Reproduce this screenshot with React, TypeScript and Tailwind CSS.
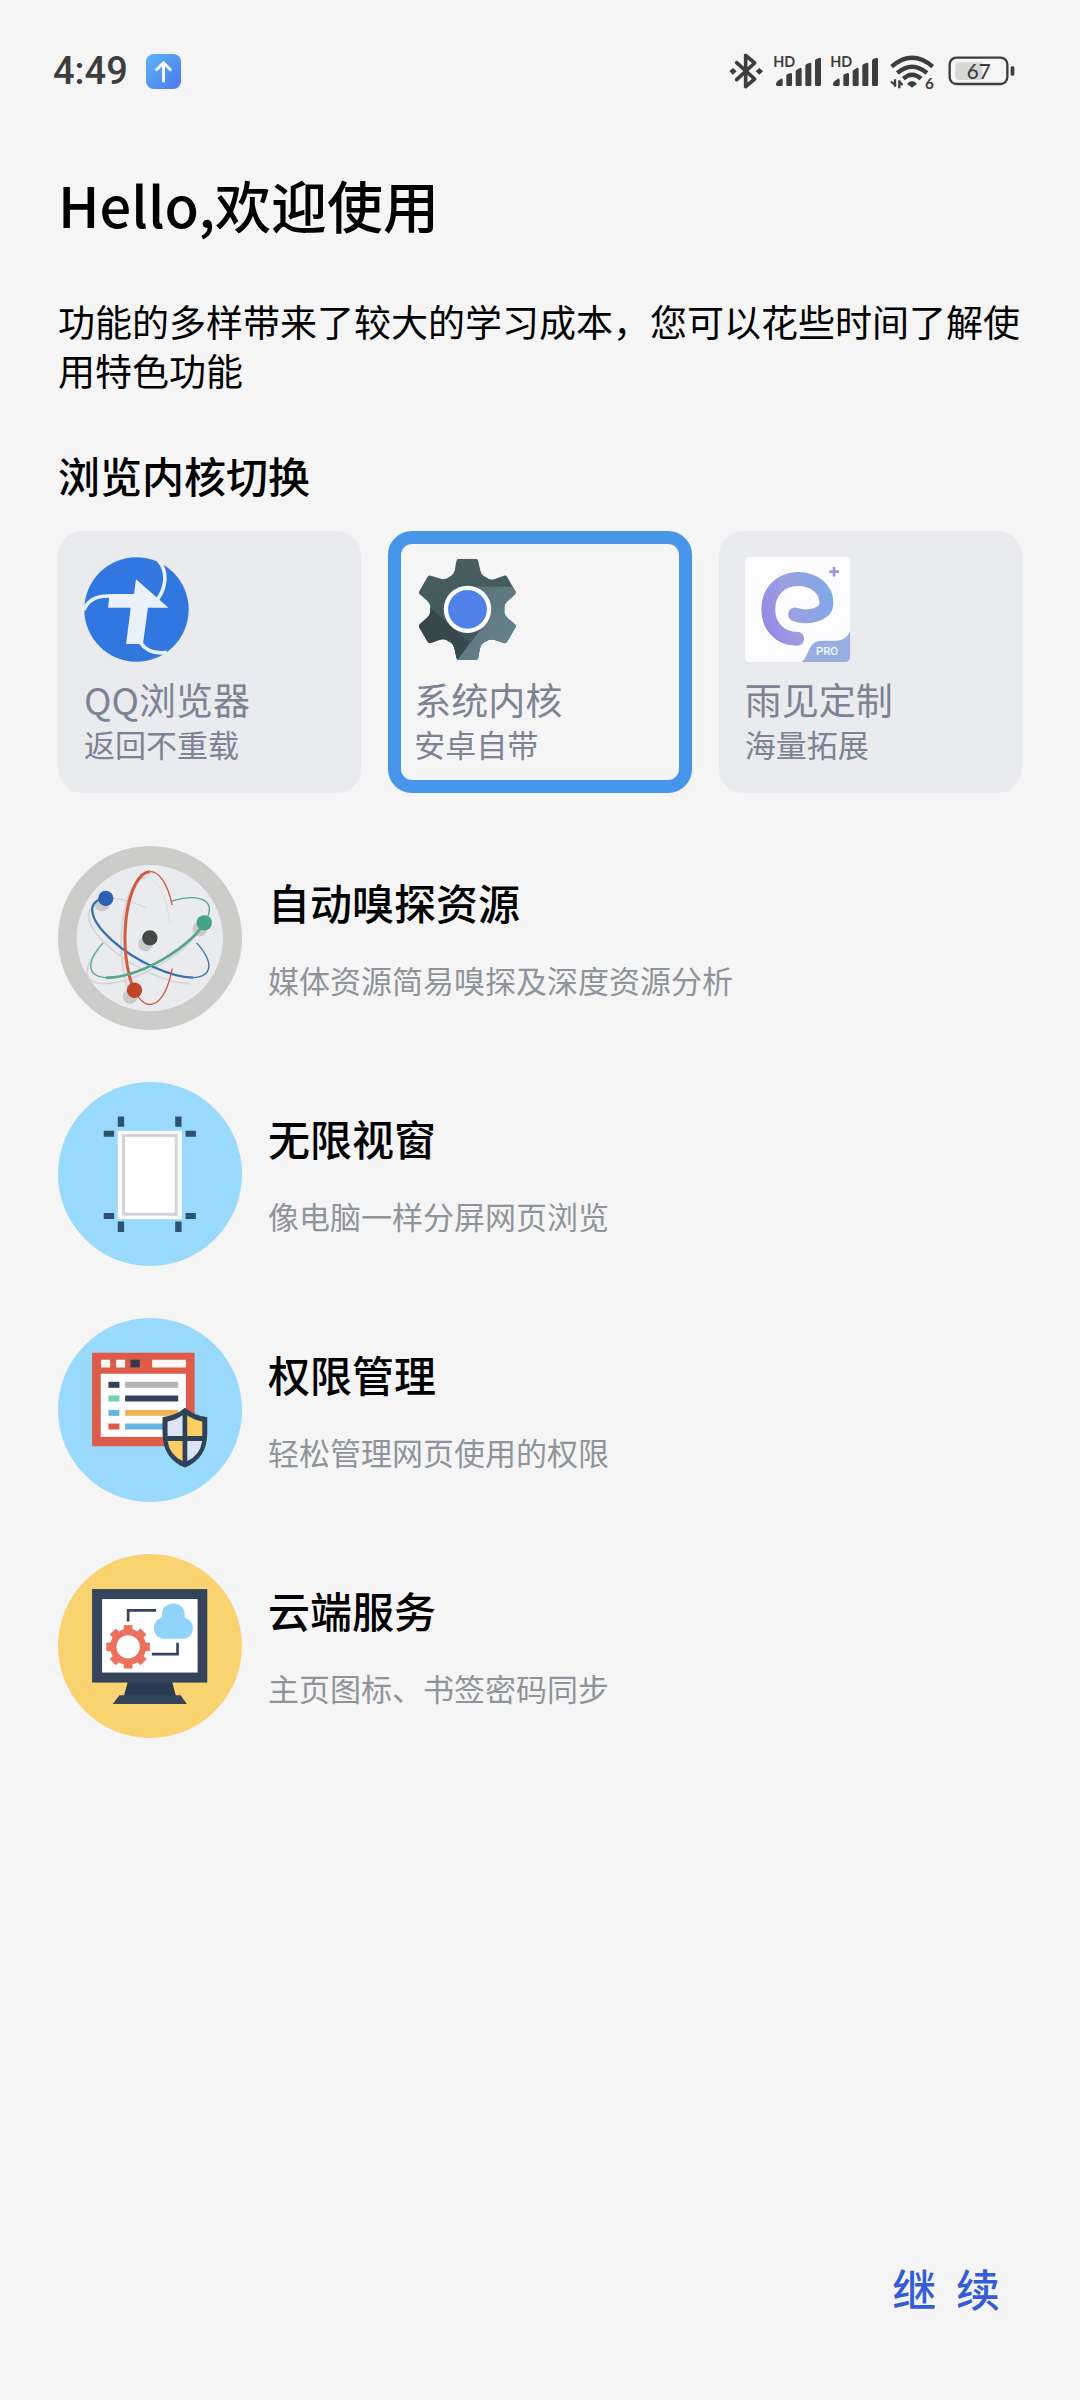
import React, { useState } from 'react';

interface Kernel {
  id: string;
  title: string;
  subtitle: string;
  icon: React.ReactNode;
}

interface Feature {
  title: string;
  subtitle: string;
  icon: React.ReactNode;
}

const TEETH_6 = [0, 60, 120, 180, 240, 300];
const TEETH_8 = [0, 45, 90, 135, 180, 225, 270, 315];

const BluetoothIcon = () => (
  <svg className="w-[36px] h-[37px]" viewBox="88 66 108 111" fill="none" stroke="#3d3d3d" strokeWidth="11" strokeLinejoin="round" strokeLinecap="round">
    <path d="M111 95 L165 144 L138 167 V73 L165 96 L111 146" />
    <path d="M89 121 L100 111 L111 121 L100 131Z M168 121 L179 111 L190 121 L179 131Z" fill="#3d3d3d" stroke="none" />
  </svg>
);

const SignalIcon = () => (
  <svg className="w-[49px] h-[37px]" viewBox="220 66 147 111" fill="#3d3d3d">
    <text x="221" y="108" fontSize="43" fontWeight="700" fontFamily="Lato, sans-serif">HD</text>
    <path d="M229 160 Q229 154 234 150 L244 143 Q249 142 249 147 V161 Q249 165 245 165 H234 Q229 165 229 160Z" />
    <path d="M260 134 Q260 131 264 129 L273 126 Q277 126 277 130 V161 Q277 165 273 165 H264 Q260 165 260 161Z" />
    <path d="M288 121 Q288 118 292 116 L302 110 Q306 110 306 114 V161 Q306 165 302 165 H292 Q288 165 288 161Z" />
    <path d="M317 104 Q317 101 321 99 L331 95 Q335 95 335 99 V161 Q335 165 331 165 H321 Q317 165 317 161Z" />
    <path d="M346 89 Q346 86 350 84 L360 80 Q364 80 364 84 V161 Q364 165 360 165 H350 Q346 165 346 161Z" />
  </svg>
);

const WifiIcon = () => (
  <svg className="w-[48px] h-[37px] overflow-visible" viewBox="562 66 144 111" fill="none" stroke="#3d3d3d" strokeWidth="13">
    <path d="M576 107 Q637 54 699 107" />
    <path d="M593 126 Q637 88 682 126" />
    <path d="M611 143 Q637 119 664 143" />
    <path d="M622 158 Q637 142 652 158 L637 170Z" fill="#3d3d3d" stroke="none" />
    <path d="M586 145 V167 M589 164 L574 152 M599 172 V148 M597 151 L609 162" strokeWidth="7" />
    <text x="676" y="173" fontSize="46" fontWeight="700" fontFamily="Lato, sans-serif" fill="#3d3d3d" stroke="none">6</text>
  </svg>
);

const BatteryIcon = () => (
  <svg className="w-[72px] h-[37px]" viewBox="730 66 216 111">
    <rect x="750" y="80" width="173" height="79" rx="20" fill="none" stroke="#3d3d3d" strokeWidth="7" />
    <path d="M780 94 H848 V147 H780 Q767 147 767 134 V107 Q767 94 780 94Z" fill="#d6d6d6" />
    <rect x="933" y="106" width="11" height="28" rx="4" fill="#3d3d3d" />
    <text x="837" y="143" textAnchor="middle" fontSize="62" fontWeight="500" fontFamily="Lato, sans-serif" fill="#3d3d3d">67</text>
  </svg>
);

const UploadIcon = () => (
  <svg className="w-[35px] h-[35px]" viewBox="0 0 36 36">
    <defs>
      <linearGradient id="upload" x1="0" y1="0" x2="1" y2="1">
        <stop offset="0" stopColor="#5fb4f8" />
        <stop offset="1" stopColor="#4a78ec" />
      </linearGradient>
    </defs>
    <rect width="36" height="36" rx="8" fill="url(#upload)" />
    <path d="M18 29 V9 M10 17 L18 9 L26 17" fill="none" stroke="#f4f8ff" strokeWidth="3" />
  </svg>
);

const QQIcon = () => (
  <svg className="size-[105px]" viewBox="133 140 315 317">
    <circle cx="290.500" cy="298.500" r="157.500" fill="#3277df" />
    <g fill="none" stroke="#e9f1fa" strokeWidth="11">
      <path d="M357 151 C386 184 380 232 354 268" />
      <path d="M132 300 C145 266 178 256 214 258" />
      <path d="M303 399 C322 428 352 432 382 428" />
    </g>
    <path d="M289 207 L387 293 H325 L310 403 H259 L273 293 H205 L209 252 H283Z" fill="#e9f1fa" />
  </svg>
);

const GearIcon = () => (
  <svg className="size-[105px]" viewBox="133 140 315 317">
    <defs>
      <clipPath id="gear">
        <circle cx="293" cy="298" r="112" />
        {TEETH_6.map(a => (
          <path
            key={a}
            transform={`rotate(${a} 293 298)`}
            d="M235 202 Q252 196 255 180 L260 152 Q262 145 268 145 H318 Q324 145 326 152 L332 180 Q335 196 351 202 L293 298Z"
          />
        ))}
      </clipPath>
      <linearGradient id="gearTop" x1="0" y1="0" x2="0" y2="1">
        <stop offset="0" stopColor="#495e60" />
        <stop offset="1" stopColor="#405558" />
      </linearGradient>
      <linearGradient id="gearLight" x1="0" y1="0" x2="1" y2="1">
        <stop offset="0" stopColor="#566f77" />
        <stop offset="1" stopColor="#6b8792" />
      </linearGradient>
    </defs>
    <g clipPath="url(#gear)">
      <rect x="133" y="140" width="315" height="317" fill="url(#gearTop)" />
      <path d="M176 288 L300 400 L262 455 H133 V340Z" fill="#36474d" />
      <path d="M325 230 H448 V457 H258 L340 350Z" fill="url(#gearLight)" />
    </g>
    <circle cx="293.500" cy="298" r="65" fill="#4f82e9" stroke="#fbfcff" strokeWidth="13" />
  </svg>
);

const YujianIcon = () => (
  <svg className="size-[105px]" viewBox="134 141 316 316">
    <defs>
      <linearGradient id="yujian" gradientUnits="userSpaceOnUse" x1="190" y1="330" x2="395" y2="260">
        <stop offset="0" stopColor="#938ae6" />
        <stop offset="0.400" stopColor="#9c9ee3" />
        <stop offset="1" stopColor="#7fa9e6" />
      </linearGradient>
      <clipPath id="yujianTile">
        <rect x="134" y="141" width="316" height="316" rx="14" />
      </clipPath>
    </defs>
    <g clipPath="url(#yujianTile)">
      <rect x="134" y="141" width="316" height="316" fill="#fdfdff" />
      <path d="M304 457 C328 440 322 394 364 393 H408 Q440 393 450 364 V457Z" fill="#96aee0" />
    </g>
    <path
      d="M291 387 C236 387 204 346 204 298 C204 245 243 207 293 207 C345 207 379 240 379 278 C379 300 368 307 350 314 C327 322 305 321 285 314"
      fill="none"
      stroke="url(#yujian)"
      strokeWidth="42"
      strokeLinecap="round"
      strokeLinejoin="round"
    />
    <path d="M402 171 V200 M388 185 H417" stroke="#9a96d8" strokeWidth="8" />
    <text x="381" y="435" textAnchor="middle" fontSize="34" fontWeight="500" fontFamily="Roboto, sans-serif" fill="#f4f7ff">PRO</text>
  </svg>
);

const AtomIcon = () => (
  <svg className="size-[184px] shrink-0" viewBox="54 48 551 551" fill="none">
    <circle cx="329.500" cy="323.500" r="275.500" fill="#cccdcb" />
    <circle cx="329" cy="324" r="219" fill="#e9ebee" />
    <g stroke="#d4d5d7" strokeWidth="5" transform="translate(-11 18)">
      <path d="M198 204 A200 75 30 0 0 460 442" />
      <path d="M498 269 A200 75 -30 0 1 198 442 A200 75 -30 0 1 189 338" />
      <path d="M329 124 A75 199 0 0 0 283 480" strokeWidth="6" />
      <path d="M329 124 A75 199 0 0 1 400 260" strokeWidth="2" />
    </g>
    <g fill="#c9cac9">
      <circle cx="186" cy="222" r="22" />
      <circle cx="479" cy="297" r="22" />
      <circle cx="270" cy="499" r="22" />
      <circle cx="316" cy="342" r="22" />
    </g>
    <g stroke="#3c6fae">
      <path d="M198 204 A200 75 30 0 0 460 442" strokeWidth="7" />
      <path d="M460 442 A200 75 30 0 0 469 338" strokeWidth="4" />
      <path d="M198 204 A200 75 30 0 1 320 234" strokeWidth="1" opacity="0.600" />
    </g>
    <g stroke="#d25a3e">
      <path d="M329 125 A75 199 0 0 0 283 480" strokeWidth="9" />
      <path d="M329 125 A75 199 0 0 1 396 225" strokeWidth="4" />
      <path d="M283 480 A75 199 0 0 0 396 415" strokeWidth="4" />
    </g>
    <g stroke="#55a78a">
      <path d="M498 269 A200 75 -30 0 1 198 442" strokeWidth="8" />
      <path d="M198 442 A200 75 -30 0 1 189 338" strokeWidth="4" />
      <path d="M498 269 A200 75 -30 0 0 394 213" strokeWidth="4" />
    </g>
    <circle cx="197" cy="205" r="23" fill="#2b61ae" />
    <circle cx="492" cy="278" r="23" fill="#48a285" />
    <circle cx="283" cy="480" r="23" fill="#bf4429" />
    <circle cx="329" cy="323" r="23" fill="#454747" />
  </svg>
);

const WindowIcon = () => (
  <svg className="size-[184px] shrink-0" viewBox="54 36 551 551">
    <circle cx="329.500" cy="311.500" r="275.500" fill="#99d9fc" />
    <rect x="233" y="182" width="192" height="265" fill="#fcfdff" />
    <rect x="250" y="196" width="158" height="236" fill="#fff" stroke="#d3d2dc" strokeWidth="9" />
    <path
      d="M233 139h19v31h-19z M405 139h19v31h-19z M191 182h31v18h-31z M436 182h31v18h-31z M191 428h31v18h-31z M436 428h31v18h-31z M233 454h19v31h-19z M405 454h19v31h-19z"
      fill="#2b526e"
    />
  </svg>
);

const PermissionIcon = () => (
  <svg className="size-[184px] shrink-0" viewBox="54 55 551 551">
    <circle cx="329.500" cy="330.500" r="275.500" fill="#99d9fc" />
    <rect x="156" y="159" width="307" height="280" fill="#de5b49" />
    <rect x="182" y="222" width="255" height="189" fill="#fff" />
    <path d="M183 180h27v23h-27z M228 180h27v23h-27z M336 180h101v23h-101z" fill="#fff8f5" />
    <rect x="271" y="180" width="28" height="23" fill="#35394a" />
    <rect x="205" y="246" width="33" height="18" fill="#344358" />
    <rect x="205" y="287" width="33" height="18" fill="#6fd3b4" />
    <rect x="205" y="330" width="33" height="18" fill="#68b4e0" />
    <rect x="205" y="371" width="33" height="18" fill="#de5b49" />
    <rect x="255" y="246" width="159" height="18" fill="#b3b4b5" />
    <rect x="255" y="287" width="159" height="18" fill="#344358" />
    <rect x="255" y="330" width="159" height="18" fill="#efb558" />
    <rect x="255" y="371" width="159" height="18" fill="#68b4e0" />
    <path d="M434 324 C452 339 475 349 501 352 V400 C501 450 478 485 434 503 C390 485 367 450 367 400 V352 C393 349 416 339 434 324Z" fill="#2f4358" />
    <path d="M427 346 V408 H382 V365 Q408 360 427 346Z" fill="#dde4f1" />
    <path d="M441 346 V408 H486 V365 Q460 360 441 346Z" fill="#fbcf63" />
    <path d="M427 423 V483 Q389 466 382 423Z" fill="#fbcf63" />
    <path d="M441 423 V483 Q479 466 486 423Z" fill="#dde4f1" />
  </svg>
);

const CloudIcon = () => (
  <svg className="size-[184px] shrink-0" viewBox="54 43 551 551">
    <circle cx="329.500" cy="318.500" r="275.500" fill="#f9d370" />
    <path d="M263 426 H396 L407 468 H251Z" fill="#2b3b4f" />
    <path d="M238 466 H421 L440 492 H218Z" fill="#35445b" />
    <rect x="156" y="148" width="345" height="280" fill="#35445b" />
    <rect x="186" y="178" width="286" height="220" fill="#fff" />
    <path d="M264 245 V212 H348 M412 309 V343 H335" fill="none" stroke="#35445b" strokeWidth="8" />
    <path d="M366 233 C362 207 378 191 400 191 C422 191 437 207 433 233 C449 238 459 250 458 266 C457 284 445 297 427 297 H373 C355 297 342 284 341 266 C341 250 350 238 366 233Z" fill="#8fd3fb" />
    <g fill="#ee6f5b">
      {TEETH_8.map(a => (
        <path key={a} transform={`rotate(${a} 264 321)`} d="M251 256 H277 V280 H251Z" />
      ))}
      <circle cx="264" cy="321" r="54" />
    </g>
    <circle cx="264" cy="321" r="35" fill="#fff" />
  </svg>
);

const kernels: Kernel[] = [
  { id: 'qq', title: 'QQ浏览器', subtitle: '返回不重载', icon: <QQIcon /> },
  { id: 'system', title: '系统内核', subtitle: '安卓自带', icon: <GearIcon /> },
  { id: 'yujian', title: '雨见定制', subtitle: '海量拓展', icon: <YujianIcon /> },
];

const features: Feature[] = [
  { title: '自动嗅探资源', subtitle: '媒体资源简易嗅探及深度资源分析', icon: <AtomIcon /> },
  { title: '无限视窗', subtitle: '像电脑一样分屏网页浏览', icon: <WindowIcon /> },
  { title: '权限管理', subtitle: '轻松管理网页使用的权限', icon: <PermissionIcon /> },
  { title: '云端服务', subtitle: '主页图标、书签密码同步', icon: <CloudIcon /> },
];

const StatusBar = () => (
  <div className="flex items-center justify-between pt-12 pl-[53px] pr-[65px]">
    <div className="flex items-center gap-[18px] h-[46px]">
      <span className="font-[Roboto,sans-serif] font-medium text-[38px] leading-[46px] text-[#3d3d3d]">4:49</span>
      <UploadIcon />
    </div>
    <div className="flex items-center gap-2">
      <BluetoothIcon />
      <SignalIcon />
      <SignalIcon />
      <WifiIcon />
      <BatteryIcon />
    </div>
  </div>
);

export default function App() {
  const [selected, setSelected] = useState('system');

  return (
    <div className="min-h-screen flex flex-col bg-[#f5f5f5] text-black font-['Noto_Sans_CJK_SC',sans-serif]">
      <StatusBar />

      <main className="px-[58px] pt-[70px]">
        <h1 className="text-[56px] leading-[80px] font-medium">Hello,欢迎使用</h1>
        <p className="mt-[53px] text-[37px] leading-[49px]">
          功能的多样带来了较大的学习成本，您可以花些时间了解使用特色功能
        </p>

        <h2 className="mt-[50px] text-[42px] leading-[60px] font-medium">浏览内核切换</h2>
        <div role="radiogroup" aria-label="浏览内核切换" className="mt-[26px] grid grid-cols-3 gap-[27px]">
          {kernels.map(kernel => (
            <label
              key={kernel.id}
              className={`relative block cursor-pointer rounded-3xl ${
                selected === kernel.id
                  ? 'border-[13px] border-[#4795eb] p-[13px]'
                  : 'bg-[#e9ebee] p-[26px]'
              }`}
            >
              <input
                type="radio"
                name="kernel"
                value={kernel.id}
                checked={selected === kernel.id}
                onChange={() => setSelected(kernel.id)}
                className="sr-only"
              />
              {kernel.icon}
              <span className="block mt-[15px] text-[37px] leading-[44px] text-[#7b8394]">{kernel.title}</span>
              <span className="block text-[31px] leading-[46px] text-[#7b8394]">{kernel.subtitle}</span>
            </label>
          ))}
        </div>

        <ul className="mt-[53px] flex flex-col gap-[52px]">
          {features.map(feature => (
            <li key={feature.title} className="flex items-center gap-[26px]">
              {feature.icon}
              <div>
                <h3 className="text-[42px] leading-[60px] font-medium">{feature.title}</h3>
                <p className="mt-6 text-[31px] leading-[48px] text-[#8f949a]">{feature.subtitle}</p>
              </div>
            </li>
          ))}
        </ul>
      </main>

      <footer className="mt-auto flex justify-end pr-[80px] pb-[78px]">
        <button type="button" className="whitespace-pre text-[44px] leading-[68px] font-medium text-[#345cd6]">
          {'继  续'}
        </button>
      </footer>
    </div>
  );
}
